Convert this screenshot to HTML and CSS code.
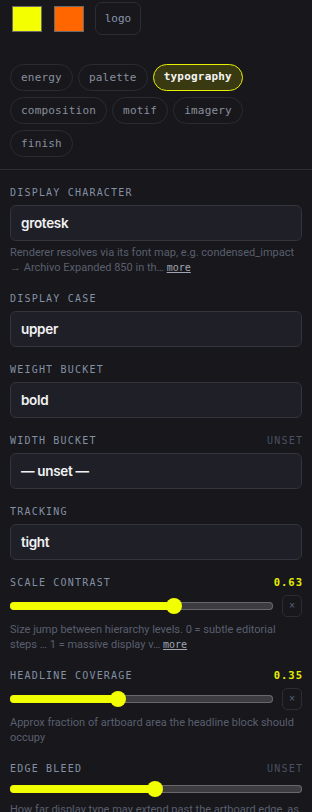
FILE: index.html
```html
<!DOCTYPE html>
<html>
<head>
<meta charset="utf-8">
<link rel="stylesheet" href="styles.css">
</head>
<body>
<div class="top">
  <div class="swatches">
    <span class="swatch swatch-yellow"></span>
    <span class="swatch swatch-orange"></span>
    <button class="logo-btn">logo</button>
  </div>
  <div class="chips">
    <span class="chip">energy</span>
    <span class="chip">palette</span>
    <span class="chip chip-active">typography</span>
    <span class="chip">composition</span>
    <span class="chip">motif</span>
    <span class="chip">imagery</span>
    <span class="chip">finish</span>
  </div>
</div>
<div class="fields">
  <div class="field">
    <div class="field-head"><span class="label">DISPLAY CHARACTER</span></div>
    <div class="input">grotesk</div>
    <p class="help">Renderer resolves via its font map, e.g. condensed_impact → Archivo Expanded 850 in th… <a class="more">more</a></p>
  </div>
  <div class="field">
    <div class="field-head"><span class="label">DISPLAY CASE</span></div>
    <div class="input">upper</div>
  </div>
  <div class="field">
    <div class="field-head"><span class="label">WEIGHT BUCKET</span></div>
    <div class="input">bold</div>
  </div>
  <div class="field">
    <div class="field-head"><span class="label">WIDTH BUCKET</span><span class="unset">UNSET</span></div>
    <div class="input">— unset —</div>
  </div>
  <div class="field">
    <div class="field-head"><span class="label">TRACKING</span></div>
    <div class="input">tight</div>
  </div>
  <div class="field">
    <div class="field-head"><span class="label">SCALE CONTRAST</span><span class="value">0.63</span></div>
    <div class="slider-row">
      <div class="track" style="--pos:62.4%"><div class="fill"></div><div class="thumb"></div></div>
      <button class="reset">×</button>
    </div>
    <p class="help">Size jump between hierarchy levels. 0 = subtle editorial steps … 1 = massive display v… <a class="more">more</a></p>
  </div>
  <div class="field">
    <div class="field-head"><span class="label">HEADLINE COVERAGE</span><span class="value">0.35</span></div>
    <div class="slider-row">
      <div class="track" style="--pos:40.9%"><div class="fill"></div><div class="thumb"></div></div>
      <button class="reset">×</button>
    </div>
    <p class="help">Approx fraction of artboard area the headline block should occupy</p>
  </div>
  <div class="field">
    <div class="field-head"><span class="label">EDGE BLEED</span><span class="unset">UNSET</span></div>
    <div class="slider-row slider-row-plain">
      <div class="track" style="--pos:49.8%"><div class="fill"></div><div class="thumb"></div></div>
    </div>
    <p class="help">How far display type may extend past the artboard edge, as a fraction of its own size</p>
  </div>
</div>
</body>
</html>
```

FILE: styles.css
```css
* { box-sizing: border-box; }
html, body { margin: 0; padding: 0; }
body {
  background: #17171c;
  font-family: "Inter", "Liberation Sans", sans-serif;
  color: #e8e8ec;
  overflow: hidden;
}
.top {
  padding: 2px 10px 12px;
  border-bottom: 1px solid #2e2e34;
}
.swatches {
  display: flex;
  align-items: center;
  height: 33px;
  margin-bottom: 28px;
}
.swatch {
  display: block;
  width: 30px;
  height: 26px;
  border: 1.5px solid #6a6a6a;
  margin-left: 2px;
  margin-right: 11px;
}
.swatch-yellow { background: #f4ff00; }
.swatch-orange { background: #ff6600; margin-left: 1px; }
.logo-btn {
  width: 46px;
  height: 33px;
  border: 1px solid #2c2d34;
  border-radius: 7px;
  background: transparent;
  color: #8895aa;
  font-family: "DejaVu Sans Mono", monospace;
  font-size: 11px;
  padding: 0;
}
.chips {
  display: flex;
  flex-wrap: wrap;
  gap: 6px 5px;
  padding-top: 1px;
}
.chip {
  height: 27px;
  line-height: 25px;
  padding: 0 10px;
  border: 1px solid #2b2c33;
  border-radius: 14px;
  font-family: "DejaVu Sans Mono", monospace;
  font-size: 11px;
  letter-spacing: 0.2px;
  color: #8a8f9c;
}
.chip-active {
  background: #3a3a12;
  border: 1.5px solid #e6f000;
  color: #f4f4f4;
  font-weight: bold;
  line-height: 24px;
}
.fields {
  padding: 14.5px 10px 0;
  display: flex;
  flex-direction: column;
  gap: 15px;
}
.field-head {
  display: flex;
  justify-content: space-between;
  align-items: center;
  height: 15px;
  margin-bottom: 5px;
  font-family: "DejaVu Sans Mono", monospace;
  font-size: 10px;
  letter-spacing: 1.2px;
}
.label { color: #8390a3; }
.unset { color: #4b5060; margin-right: -1.2px; }
.value { color: #e6f000; font-weight: bold; font-size: 10.5px; letter-spacing: 1px; margin-right: -1px; }
.input {
  height: 36px;
  border: 1px solid #33343c;
  border-radius: 6px;
  background: #1f2027;
  padding: 0 10px;
  display: flex;
  align-items: center;
  font-size: 13.5px;
  font-weight: 600;
  letter-spacing: -0.3px;
  color: #f2f2f4;
}
.help {
  margin: 4px 0 0;
  font-family: "Roboto", "Liberation Sans", sans-serif;
  font-size: 11px;
  line-height: 15.5px;
  color: #5a5f6e;
}
.more {
  font-family: "DejaVu Sans Mono", monospace;
  font-size: 10px;
  color: #a0a6b4;
  text-decoration: underline;
}
.slider-row {
  display: flex;
  align-items: center;
  gap: 9px;
  height: 22px;
}
.slider-row-plain { height: 16px; }
.slider-row + .help { margin-top: 5px; }
.track {
  position: relative;
  flex: 1;
  height: 8px;
  border-radius: 4px;
  background: #3d3d40;
  box-shadow: inset 0 0 0 1px #67676c;
}
.fill {
  width: var(--pos);
  height: 100%;
  background: #f2ff00;
  border-radius: 4px 0 0 4px;
}
.thumb {
  position: absolute;
  left: var(--pos);
  top: 50%;
  width: 16px;
  height: 16px;
  border-radius: 50%;
  background: #f2ff00;
  transform: translate(-50%, -50%);
}
.reset {
  width: 20px;
  height: 22px;
  border: 1px solid #2c2d34;
  border-radius: 5px;
  background: transparent;
  color: #5d6a8a;
  font-size: 8px;
  padding: 0;
  font-family: "DejaVu Sans", sans-serif;
}
```
